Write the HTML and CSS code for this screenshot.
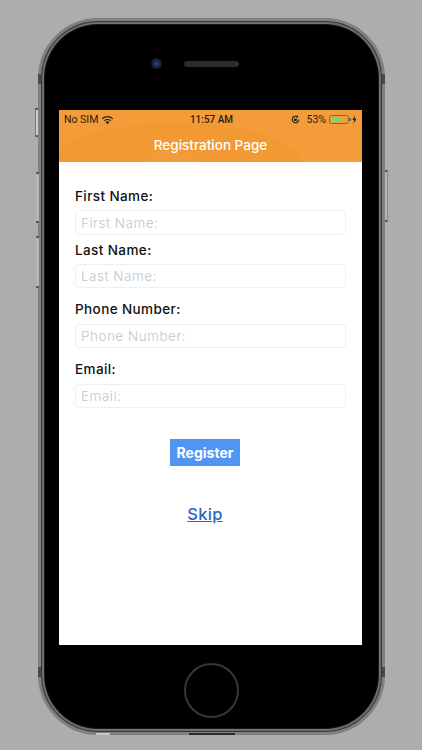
FILE: index.html
```html
<!DOCTYPE html>
<html lang="en">
<head>
  <meta charset="UTF-8">
  <meta name="viewport" content="width=device-width, initial-scale=1.0">
  <title>Registration Page</title>
  <link rel="stylesheet" href="styles.css">
</head>
<body>
  <div class="phone">
    <!-- side buttons and antenna bands -->
    <span class="side-btn mute"></span>
    <span class="side-btn vol-up"></span>
    <span class="side-btn vol-down"></span>
    <span class="side-btn power"></span>
    <span class="band band-tl"></span>
    <span class="band band-tr"></span>
    <span class="band band-bl"></span>
    <span class="band band-br"></span>
    <span class="edge-port"></span>
    <span class="edge-nick"></span>

    <div class="phone-top">
      <span class="camera"></span>
      <span class="speaker"></span>
    </div>

    <div class="screen">
      <div class="app-header">
        <div class="status-bar">
          <div class="status-left">
            <span>No SIM</span>
            <svg class="wifi" viewBox="0 0 14 10" width="13" height="10">
              <path d="M7 9.6 4.9 7.2a3.1 3.1 0 0 1 4.2 0z" fill="#2a2113"/>
              <path d="M3.6 5.9a5 5 0 0 1 6.8 0" fill="none" stroke="#2a2113" stroke-width="1.4"/>
              <path d="M1.4 3.6a8.2 8.2 0 0 1 11.2 0" fill="none" stroke="#2a2113" stroke-width="1.4"/>
            </svg>
          </div>
          <div class="status-time">11:57 AM</div>
          <div class="status-right">
            <svg class="lock" viewBox="0 0 10 10" width="9" height="9">
              <path d="M8.6 5A3.6 3.6 0 1 1 7 2" fill="none" stroke="#2a2113" stroke-width="1.3"/>
              <path d="M6.3.4 8.4 2 6.4 3.6z" fill="#2a2113"/>
              <rect x="3.4" y="4" width="3.2" height="2.6" fill="#2a2113"/>
            </svg>
            <span class="battery-pct">53%</span>
            <span class="battery"><span class="battery-fill"></span></span>
            <svg class="bolt" viewBox="0 0 6 10" width="5" height="9">
              <path d="M3.8 0 .4 5.6h2L1.8 10l3.6-6H3.2z" fill="#2a2113"/>
            </svg>
          </div>
        </div>
        <div class="app-title">Registration Page</div>
      </div>

      <form class="reg-form">
        <div class="field first">
          <label>First Name:</label>
          <input type="text" placeholder="First Name:">
        </div>
        <div class="field tight">
          <label>Last Name:</label>
          <input type="text" placeholder="Last Name:">
        </div>
        <div class="field spaced">
          <label>Phone Number:</label>
          <input type="text" placeholder="Phone Number:">
        </div>
        <div class="field spaced">
          <label>Email:</label>
          <input type="text" placeholder="Email:">
        </div>
        <div class="actions">
          <button type="button" class="register-btn">Register</button>
          <a href="#" class="skip-link">Skip</a>
        </div>
      </form>
    </div>

    <div class="phone-bottom">
      <span class="home-btn"></span>
    </div>
  </div>
</body>
</html>
```

FILE: styles.css
```css
* {
  margin: 0;
  padding: 0;
  box-sizing: border-box;
}

body {
  background: #adadad;
  height: 750px;
  overflow: hidden;
  padding: 18px 0 0 38px;
  font-family: Inter, "Liberation Sans", sans-serif;
}

/* Device frame */
.phone {
  position: relative;
  width: 347px;
  height: 717px;
  background: #000;
  border: 3px solid #808085;
  border-radius: 60px;
  display: flex;
  flex-direction: column;
  box-shadow: inset 0 0 0 1px #3a3a3d, inset 0 0 0 2px #66666a, inset 0 0 0 3px #77777b, inset 0 0 0 4px #161618;
}

.side-btn {
  position: absolute;
  width: 3px;
  background: #b4b4b7;
  border-top: 2px solid #58585c;
  border-bottom: 2px solid #58585c;
}

.mute { left: -6px; top: 87px; height: 29px; background: #d0d0d2; border-left: 1px solid #77777b; }
.vol-up { left: -5px; top: 151px; height: 51px; }
.vol-down { left: -5px; top: 215px; height: 52px; }
.power { right: -6px; top: 149px; height: 52px; border-right: 1px solid #8a8a8e; }

.band {
  position: absolute;
  width: 3px;
  height: 10px;
  background: #48484c;
}

.band-tl { left: -3px; top: 53px; }
.band-tr { right: -3px; top: 53px; }
.band-bl { left: -3px; bottom: 55px; }
.band-br { right: -3px; bottom: 55px; }

.edge-port {
  position: absolute;
  left: 148px;
  bottom: -3px;
  width: 46px;
  height: 2px;
  background: #2d2d31;
}

.edge-nick {
  position: absolute;
  left: 55px;
  bottom: -3px;
  width: 14px;
  height: 2px;
  border-radius: 2px;
  background: #c8c8ca;
}

.phone-top {
  height: 89px;
  flex-shrink: 0;
  display: flex;
  align-items: center;
  padding: 0 0 4px 110px;
  gap: 22px;
}

.camera {
  width: 11px;
  height: 11px;
  border-radius: 50%;
  background: radial-gradient(circle, #27449a 0%, #1b2a5a 35%, #16161a 70%);
}

.speaker {
  width: 55px;
  height: 6px;
  border-radius: 3px;
  background: #2c2c2f;
}

/* App screen */
.screen {
  width: 303px;
  height: 535px;
  margin-left: 18px;
  background: #fff;
  flex-shrink: 0;
}

.app-header {
  height: 52px;
  color: #fff;
  background:
    radial-gradient(ellipse 34px 20px at 112px 60px, #f39b37 97%, transparent 100%),
    radial-gradient(ellipse 130px 46px at 116px 58px, #f29934 98%, transparent 100%),
    #f39c39;
}

.status-bar {
  height: 17px;
  padding: 2px 5px 0;
  display: flex;
  align-items: center;
  justify-content: space-between;
  font-family: Roboto, "Liberation Sans", sans-serif;
  font-size: 10.5px;
  color: #2a2113;
}

.status-left,
.status-right {
  width: 110px;
  display: flex;
  align-items: center;
}

.status-left { gap: 3px; }
.status-right { justify-content: flex-end; gap: 2px; }

.status-time {
  font-size: 10px;
  font-weight: 500;
  padding-left: 2px;
}

.lock { margin-right: 4px; }

.battery {
  position: relative;
  width: 20px;
  height: 9px;
  margin: 0 1px;
  border: 1px solid #7d6a3c;
  border-radius: 2.5px;
  padding: 1px;
  display: flex;
}

.battery::after {
  content: '';
  position: absolute;
  right: -3px;
  top: 2px;
  width: 1.5px;
  height: 3px;
  background: #7d6a3c;
}

.battery-fill {
  width: 10px;
  background: #6fdc72;
  border-radius: 1px;
}

.app-title {
  height: 35px;
  display: flex;
  align-items: center;
  justify-content: center;
  font-size: 13.5px;
  font-weight: 500;
}

/* Form */
.reg-form {
  padding: 0 16px;
}

.field {
  display: flex;
  flex-direction: column;
}

.field.first { margin-top: 26px; }
.field.tight { margin-top: 7px; }
.field.spaced { margin-top: 13px; }

.field label {
  height: 16px;
  line-height: 16px;
  margin-bottom: 6px;
  font-size: 13.5px;
  font-weight: 500;
  color: #111;
  letter-spacing: 0.4px;
}

.field.spaced label { margin-bottom: 7px; }

.field input {
  height: 24px;
  border: 1px solid #efefef;
  border-radius: 4px;
  padding: 0 5px;
  font-family: inherit;
  font-size: 13.5px;
  font-weight: 300;
  letter-spacing: 0.5px;
  background: #fff;
}

.field.first input { height: 25px; }

.field input::placeholder {
  color: #c6c6c8;
  opacity: 1;
}

.actions {
  margin-top: 31px;
  display: flex;
  flex-direction: column;
  align-items: center;
  padding-right: 11px;
}

.register-btn {
  width: 70px;
  height: 27px;
  border: none;
  background: #5095f4;
  color: #fff;
  font-family: inherit;
  font-size: 14px;
  font-weight: 700;
}

.skip-link {
  margin-top: 38px;
  font-size: 16.5px;
  font-weight: 500;
  color: #2f64bb;
  letter-spacing: 0.3px;
  text-decoration: underline;
}

/* Home button */
.phone-bottom {
  flex: 1;
  display: flex;
  align-items: center;
  justify-content: center;
  padding-top: 3px;
}

.home-btn {
  width: 55px;
  height: 55px;
  border-radius: 50%;
  border: 2px solid #37373b;
}
```
